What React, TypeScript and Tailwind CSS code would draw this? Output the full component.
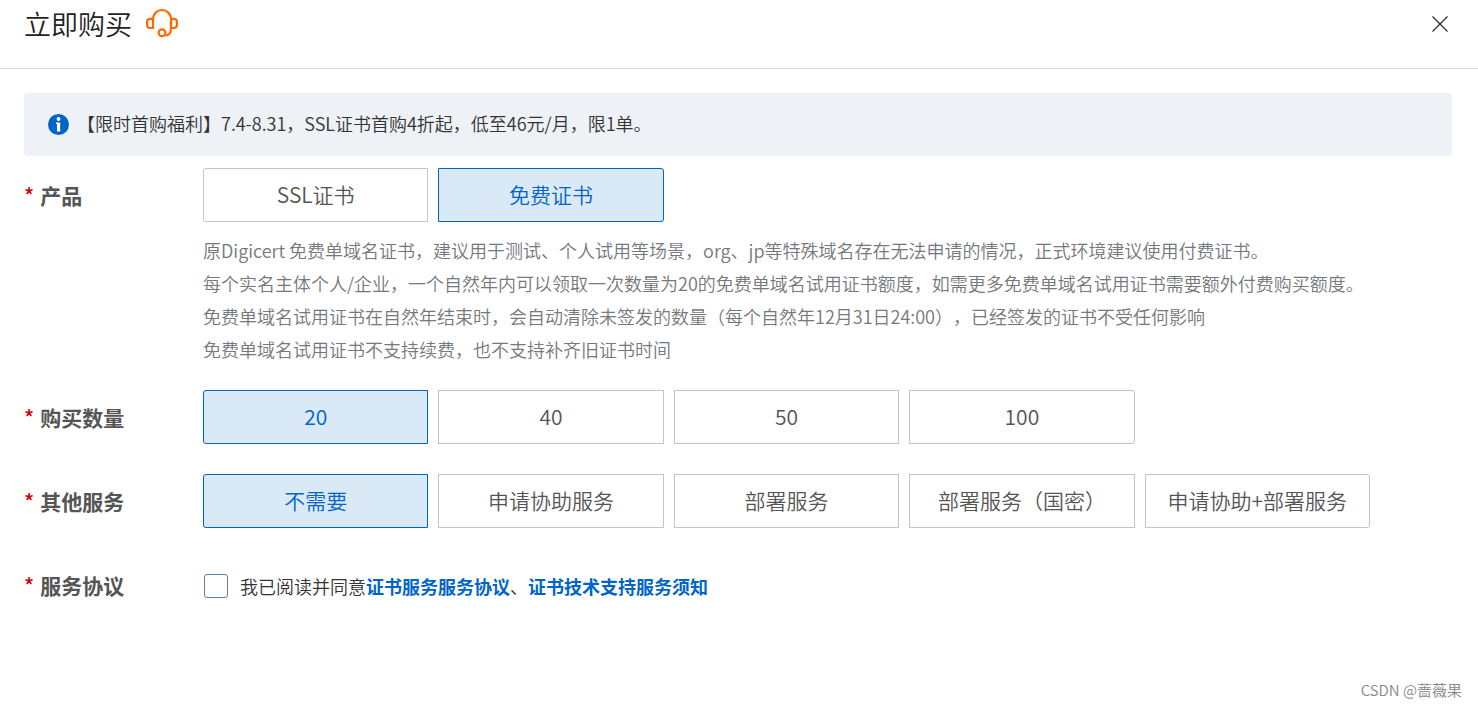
import { useState } from "react";
import type { ReactNode } from "react";
import clsx from "clsx";

const PRODUCTS = ["SSL证书", "免费证书"];
const QUANTITIES = ["20", "40", "50", "100"];
const SERVICES = ["不需要", "申请协助服务", "部署服务", "部署服务（国密）", "申请协助+部署服务"];

const PRODUCT_NOTES = [
  "原Digicert 免费单域名证书，建议用于测试、个人试用等场景，org、jp等特殊域名存在无法申请的情况，正式环境建议使用付费证书。",
  "每个实名主体个人/企业，一个自然年内可以领取一次数量为20的免费单域名试用证书额度，如需更多免费单域名试用证书需要额外付费购买额度。",
  "免费单域名试用证书在自然年结束时，会自动清除未签发的数量（每个自然年12月31日24:00），已经签发的证书不受任何影响",
  "免费单域名试用证书不支持续费，也不支持补齐旧证书时间",
];

function HeadsetIcon() {
  return (
    <svg className="h-8 w-8" viewBox="0 0 32 32" fill="none" stroke="#ff6a00" strokeWidth="2.2">
      <path d="M7 10.800V20H4A2.900 2.900 0 0 1 1.100 17.100v-3.400A2.900 2.900 0 0 1 4 10.800Z" />
      <path d="M25 10.800V20h3a2.900 2.900 0 0 0 2.900-2.900v-3.400a2.900 2.900 0 0 0-2.900-2.900Z" />
      <path d="M7 12V11a9 9 0 0 1 18 0V20c0 4.500-2 7.500-5.500 7.700" />
      <circle cx="16" cy="24.700" r="3.400" />
    </svg>
  );
}

function InfoIcon() {
  return (
    <svg className="h-[21px] w-[21px] shrink-0" viewBox="0 0 21 21">
      <circle cx="10.500" cy="10.500" r="10.500" fill="#0064c8" />
      <circle cx="10.500" cy="5" r="1.900" fill="#fff" />
      <path d="M8 8.500h4.200v9H9V10H8Z" fill="#fff" />
    </svg>
  );
}

function FormRow({ label, children }: { label: string; children: ReactNode }) {
  return (
    <section aria-label={label} className="flex">
      <div className="flex h-14 w-[179px] shrink-0 items-center gap-1.5 text-[21px] font-bold text-[#555]">
        <span className="font-medium text-[#d20000]">*</span>
        {label}
      </div>
      <div className="min-w-0 flex-1">{children}</div>
    </section>
  );
}

interface OptionGroupProps {
  options: string[];
  value: string;
  onChange: (option: string) => void;
}

function OptionGroup({ options, value, onChange }: OptionGroupProps) {
  return (
    <div className="grid max-w-[1167px] grid-cols-5 gap-2.5">
      {options.map((option, i) => (
        <button
          key={option}
          type="button"
          aria-pressed={option === value}
          onClick={() => onChange(option)}
          className={clsx(
            "h-[54px] cursor-pointer border text-[21px] whitespace-nowrap",
            i === 0 && "rounded-l-[3px]",
            i === options.length - 1 && "rounded-r-[3px]",
            option === value
              ? "border-[#0064c8] bg-[#d9eaf6] text-[#0064c8]"
              : "border-[#c0c4cc] bg-white text-[#555]"
          )}
        >
          {option}
        </button>
      ))}
    </div>
  );
}

export default function App() {
  const [product, setProduct] = useState("免费证书");
  const [quantity, setQuantity] = useState("20");
  const [service, setService] = useState("不需要");
  const [agreed, setAgreed] = useState(false);

  return (
    <div className="flex min-h-screen flex-col bg-white font-['Noto_Sans_CJK_SC',sans-serif] font-[350] text-[#333] [text-spacing-trim:space-all]">
      <header className="flex items-start justify-between border-b border-[#dedede] px-6 pb-5">
        <div className="flex h-12 items-center gap-3.5">
          <h1 className="text-[27px] font-[350] text-[#222]">立即购买</h1>
          <HeadsetIcon />
        </div>
        <button type="button" aria-label="关闭" className="flex h-12 w-7 cursor-pointer items-center justify-center">
          <svg className="h-4 w-4" viewBox="0 0 16 16" stroke="#333" strokeWidth="1.400">
            <path d="M0.500 0.500l15 15M15.500 0.500l-15 15" />
          </svg>
        </button>
      </header>

      <main className="flex-1 px-6 pt-6">
        <div className="mr-0.5 flex h-[63px] items-center gap-2 rounded bg-[#eef1f6] px-6 text-lg">
          <InfoIcon />
          <p className="pb-1">【限时首购福利】7.4-8.31，SSL证书首购4折起，低至46元/月，限1单。</p>
        </div>

        <div className="mt-3 flex flex-col gap-7">
          <FormRow label="产品">
            <OptionGroup options={PRODUCTS} value={product} onChange={setProduct} />
            <div className="-mb-1 pt-3 text-lg leading-[33px] text-[#75787d]">
              {PRODUCT_NOTES.map((note) => (
                <p key={note}>{note}</p>
              ))}
            </div>
          </FormRow>

          <FormRow label="购买数量">
            <OptionGroup options={QUANTITIES} value={quantity} onChange={setQuantity} />
          </FormRow>

          <FormRow label="其他服务">
            <OptionGroup options={SERVICES} value={service} onChange={setService} />
          </FormRow>

          <FormRow label="服务协议">
            <div className="flex h-14 items-center gap-3 text-lg">
              <input
                id="agreement"
                type="checkbox"
                checked={agreed}
                onChange={(e) => setAgreed(e.target.checked)}
                className="ml-px h-6 w-6 shrink-0 appearance-none rounded-[3px] border border-[#5f7fa8] bg-white checked:bg-[#0064c8]"
              />
              <p>
                <label htmlFor="agreement">我已阅读并同意</label>
                <a href="#service" className="font-bold text-[#0064c8]">证书服务服务协议</a>、
                <a href="#support" className="font-bold text-[#0064c8]">证书技术支持服务须知</a>
              </p>
            </div>
          </FormRow>
        </div>
      </main>

      <footer className="px-4 pb-1.5 text-right text-[15px] text-[#888]">CSDN @蔷薇果</footer>
    </div>
  );
}
